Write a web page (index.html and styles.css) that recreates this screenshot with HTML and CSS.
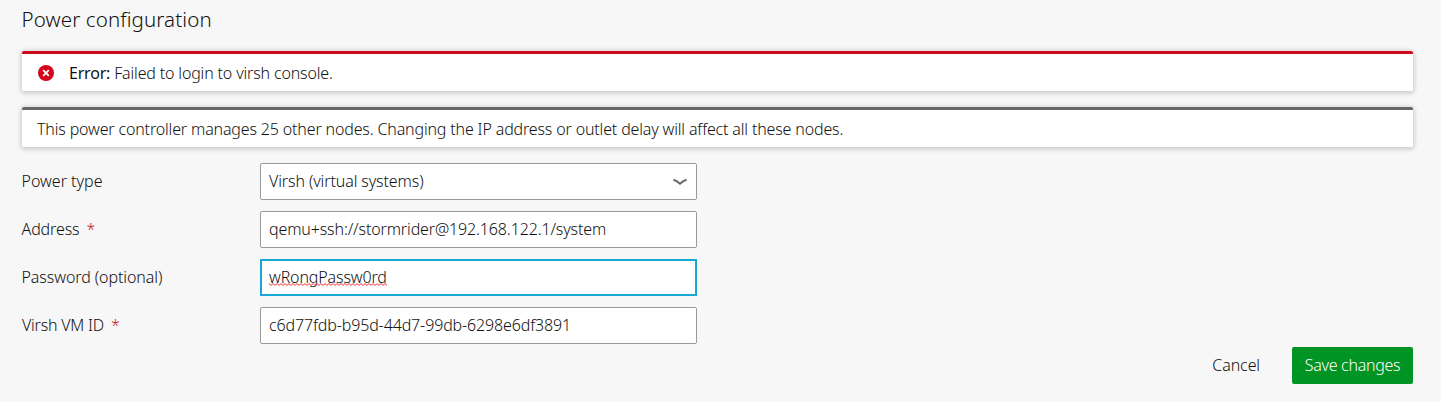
FILE: index.html
```html
<!DOCTYPE html>
<html lang="en">
<head>
<meta charset="utf-8">
<title>Power configuration</title>
<link rel="stylesheet" href="styles.css">
</head>
<body>
<main class="panel">
  <h4 class="heading">Power configuration</h4>
  <div class="notification notification--negative">
    <svg class="notification__icon" width="16" height="16" viewBox="0 0 16 16"><circle cx="8" cy="8" r="8" fill="#d3061a"/><path d="M5.2 5.2l5.6 5.6M10.8 5.2l-5.6 5.6" stroke="#fff" stroke-width="1.7" fill="none"/></svg>
    <p class="notification__text"><span class="notification__status">Error: </span>Failed to login to virsh console.</p>
  </div>
  <div class="notification">
    <p class="notification__text">This power controller manages 25 other nodes. Changing the IP address or outlet delay will affect all these nodes.</p>
  </div>
  <form class="form">
    <div class="row">
      <div class="label">Power type</div>
      <div class="field field--select"><span class="value value--type">Virsh (virtual systems)</span>
        <svg class="chevron" width="16" height="16" viewBox="0 0 16 16"><path d="M1.4 5.7C3.6 6.6 6 8 8 9.8C10 8 12.4 6.6 14.6 5.7" fill="none" stroke="#666" stroke-width="1.9"/></svg>
      </div>
    </div>
    <div class="row">
      <div class="label label--address">Address<span class="required">*</span></div>
      <div class="field"><span class="value">qemu+ssh://stormrider@192.168.122.1/system</span></div>
    </div>
    <div class="row">
      <div class="label label--password">Password (optional)</div>
      <div class="field field--focus"><span class="value">wRongPassw0rd</span><svg class="squiggle" width="118" height="3"><defs><pattern id="wave" width="4" height="3" patternUnits="userSpaceOnUse"><path d="M0 .6L2 2.4L4 .6" fill="none" stroke="#e33" stroke-width="1"/></pattern></defs><rect width="118" height="3" fill="url(#wave)"/></svg></div>
    </div>
    <div class="row">
      <div class="label label--id">Virsh VM ID<span class="required">*</span></div>
      <div class="field"><span class="value">c6d77fdb-b95d-44d7-99db-6298e6df3891</span></div>
    </div>
    <div class="actions">
      <button type="button" class="button">Cancel</button>
      <button type="button" class="button button--positive">Save changes</button>
    </div>
  </form>
</main>
</body>
</html>
```

FILE: styles.css
```css
* { box-sizing: border-box; }
body {
  margin: 0;
  background: #f7f7f7;
  color: #111;
  font: 300 16px/24px "Noto Sans", "Open Sans", sans-serif;
}
.panel { padding: 3px 28px 0 22px; }
.heading {
  margin: 0 0 16px -0.5px;
  font-size: 20.5px;
  font-weight: 300;
  line-height: 32px;
  letter-spacing: 0.12px;
}
.notification {
  display: flex;
  align-items: center;
  height: 40px;
  margin-bottom: 16px;
  padding: 0 15px;
  border-top: 3px solid #666;
  border-radius: 2px;
  background: #fff;
  box-shadow: 0 1px 5px 1px rgba(0, 0, 0, .2);
}
.notification--negative { border-top-color: #cd0a1c; padding-left: 16px; }
.notification__icon { margin-right: 15px; }
.notification__text { margin: 0; letter-spacing: -0.155px; }
.notification__status { font-weight: 400; letter-spacing: -0.2px; }
.form { display: flex; flex-direction: column; gap: 11px; }
.row { display: grid; grid-template-columns: 238px 437px; height: 37px; align-items: center; }
.label { margin-left: -0.5px; padding-bottom: 2px; }
.label--address { letter-spacing: -0.1px; }
.label--password { letter-spacing: -0.08px; }
.label--id { letter-spacing: -0.22px; margin-left: 0; }
.required { margin-left: 7px; color: #c7162b; }
.field {
  display: flex;
  align-items: center;
  position: relative;
  height: 37px;
  padding: 0 8px;
  border: 1px solid #999;
  border-radius: 2px;
  background: #fff;
}
.field--select { justify-content: space-between; }
.field--focus { padding: 0 7px; border: 2px solid #19a8d6; border-radius: 0; }
.value { padding-bottom: 2px; letter-spacing: -0.13px; }
.value--type { letter-spacing: -0.11px; }
.squiggle { position: absolute; left: 7px; bottom: 8px; }
.actions { display: flex; justify-content: flex-end; margin-top: -8px; }
.button {
  height: 37px;
  padding: 0 32px 2px 0;
  border: 0;
  background: none;
  color: #111;
  font: inherit;
  letter-spacing: -0.1px;
}
.button--positive {
  width: 121px;
  padding: 0 0 2px;
  border-radius: 2px;
  background: #009424;
  color: #fff;
  letter-spacing: -0.28px;
}
```
